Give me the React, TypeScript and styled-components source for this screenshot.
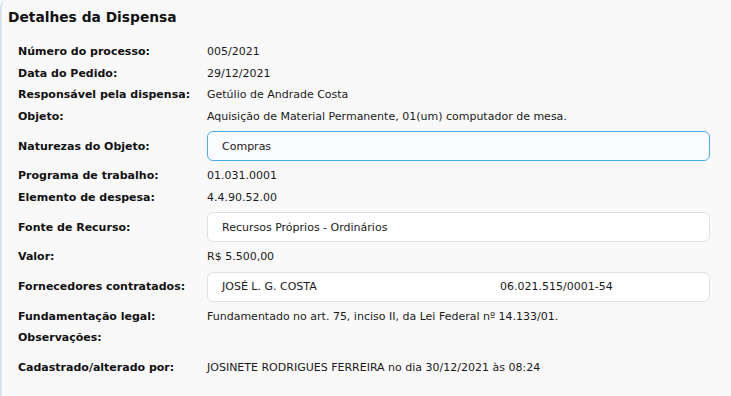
import styled, { createGlobalStyle } from 'styled-components';

const GlobalStyle = createGlobalStyle`
  html, body {
    margin: 0;
    padding: 0;
    background: #f9f9f9;
  }
  body {
    font-family: 'DejaVu Sans', Verdana, sans-serif;
    color: #111;
  }
`;

const Panel = styled.section`
  min-height: 396px;
  box-sizing: border-box;
  background: #f9f9f9;
  border-left: 2px solid #d6e4f0;
  border-top-left-radius: 7px;
  padding: 8px 0 0 6px;
`;

const Title = styled.h2`
  margin: 0 0 15px;
  font-size: 13.8px;
  font-weight: bold;
  color: #111;
  line-height: 18px;
`;

const Rows = styled.div`
  display: flex;
  flex-direction: column;
  padding-left: 10px;
  width: 692px;
`;

const Row = styled.div<{ $boxed?: boolean; $gap?: number }>`
  display: grid;
  grid-template-columns: 189px 1fr;
  align-items: center;
  min-height: ${(p) => (p.$boxed ? '30px' : '21.5px')};
  margin: ${(p) => (p.$boxed ? '4px 0' : '0')};
  margin-top: ${(p) => (p.$gap ? `${p.$gap}px` : undefined)};
  font-size: 11px;
`;

const Label = styled.span`
  font-weight: bold;
  color: #111;
`;

const Value = styled.span`
  color: #1a1a1a;
`;

const Box = styled.div<{ $focused?: boolean }>`
  display: flex;
  align-items: center;
  box-sizing: border-box;
  height: 30px;
  padding: 0 14px;
  border-radius: 6px;
  border: ${(p) => (p.$focused ? '1.5px solid #47ade6' : '1px solid #e1e1e1')};
  background: ${(p) => (p.$focused ? '#f9fbfe' : '#ffffff')};
  color: #1a1a1a;
`;

const SupplierGrid = styled.div`
  display: grid;
  grid-template-columns: 278px 1fr;
  width: 100%;
`;

type Item = { label: string; value?: string };

const head: Item[] = [
  { label: 'Número do processo:', value: '005/2021' },
  { label: 'Data do Pedido:', value: '29/12/2021' },
  { label: 'Responsável pela dispensa:', value: 'Getúlio de Andrade Costa' },
  { label: 'Objeto:', value: 'Aquisição de Material Permanente, 01(um) computador de mesa.' },
];

export default function App() {
  return (
    <>
      <GlobalStyle />
      <Panel>
        <Title>Detalhes da Dispensa</Title>
        <Rows>
          {head.map((it) => (
            <Row key={it.label}>
              <Label>{it.label}</Label>
              <Value>{it.value}</Value>
            </Row>
          ))}
          <Row $boxed>
            <Label>Naturezas do Objeto:</Label>
            <Box $focused>Compras</Box>
          </Row>
          <Row>
            <Label>Programa de trabalho:</Label>
            <Value>01.031.0001</Value>
          </Row>
          <Row>
            <Label>Elemento de despesa:</Label>
            <Value>4.4.90.52.00</Value>
          </Row>
          <Row $boxed>
            <Label>Fonte de Recurso:</Label>
            <Box>Recursos Próprios - Ordinários</Box>
          </Row>
          <Row>
            <Label>Valor:</Label>
            <Value>R$ 5.500,00</Value>
          </Row>
          <Row $boxed>
            <Label>Fornecedores contratados:</Label>
            <Box>
              <SupplierGrid>
                <span>JOSÉ L. G. COSTA</span>
                <span>06.021.515/0001-54</span>
              </SupplierGrid>
            </Box>
          </Row>
          <Row>
            <Label>Fundamentação legal:</Label>
            <Value>Fundamentado no art. 75, inciso II, da Lei Federal nº 14.133/01.</Value>
          </Row>
          <Row>
            <Label>Observações:</Label>
            <Value />
          </Row>
          <Row $gap={8.5}>
            <Label>Cadastrado/alterado por:</Label>
            <Value>JOSINETE RODRIGUES FERREIRA no dia 30/12/2021 às 08:24</Value>
          </Row>
        </Rows>
      </Panel>
    </>
  );
}
